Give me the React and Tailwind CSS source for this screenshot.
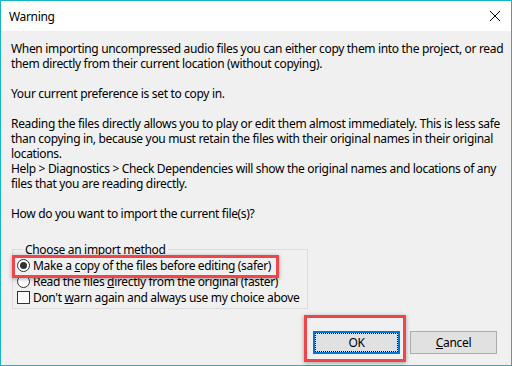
import React from 'react';

const font = { fontFamily: '"Noto Sans", "Open Sans", sans-serif' };

const Radio = ({ checked }) => (
  <span className="flex h-[13px] w-[13px] shrink-0 items-center justify-center rounded-full border border-[#333] bg-white">
    {checked && <span className="h-[7px] w-[7px] rounded-full bg-[#333]" />}
  </span>
);

const App = () => {
  const lines = [
    'When importing uncompressed audio files you can either copy them into the project, or read',
    'them directly from their current location (without copying).',
    '',
    'Your current preference is set to copy in.',
    '',
    'Reading the files directly allows you to play or edit them almost immediately. This is less safe',
    'than copying in, because you must retain the files with their original names in their original',
    'locations.',
    'Help > Diagnostics > Check Dependencies will show the original names and locations of any',
    'files that you are reading directly.',
    '',
    'How do you want to import the current file(s)?',
  ];

  return (
    <div
      className="relative flex h-[366px] w-[512px] flex-col border border-[#18b4c8] bg-[#f0f0f0] text-[12px] leading-[15px] tracking-[-0.33px] text-black"
      style={font}
    >
      {/* Title bar */}
      <div className="flex h-[30px] shrink-0 items-center justify-between bg-white pl-[8px] pr-[8px]">
        <span className="text-[12px] text-black">Warning</span>
        <svg width="12" height="12" viewBox="0 0 12 12" className="mr-[2px]">
          <path d="M1 1 L11 11 M11 1 L1 11" stroke="#000" strokeWidth="1" />
        </svg>
      </div>

      {/* Body */}
      <div className="flex flex-1 flex-col px-[10px] pt-[10px]">
        <div className="whitespace-nowrap">
          {lines.map((l, i) => (
            <div key={i} className="h-[15px]">{l}</div>
          ))}
        </div>

        <fieldset className="ml-[1px] mt-[21px] w-[296px] whitespace-nowrap border border-[#dcdcdc] pb-[3px] pl-[4px]">
          <legend className="ml-[6px] px-[2px]">Choose an import method</legend>
          <div className="flex h-[16px] items-center gap-[3px]">
            <Radio checked />
            <span>Make a <u>c</u>opy of the files before editing (safer)</span>
          </div>
          <div className="flex h-[16px] items-center gap-[3px]">
            <Radio />
            <span>Read the files <u>d</u>irectly from the original (faster)</span>
          </div>
          <div className="flex h-[16px] items-center gap-[3px]">
            <span className="h-[13px] w-[13px] shrink-0 border border-[#333] bg-white" />
            <span>Don't <u>w</u>arn again and always use my choice above</span>
          </div>
        </fieldset>

        <div className="mt-auto mb-[11px] flex justify-end gap-[10px] pr-[4px]">
          <button className="flex h-[23px] w-[87px] items-center justify-center border-2 border-[#0078d7] bg-[#e1e1e1]">
            <span className="flex h-full w-full items-center justify-center border border-dotted border-black">OK</span>
          </button>
          <button className="flex h-[23px] w-[87px] items-center justify-center border border-[#adadad] bg-[#e1e1e1]">
            <span><u>C</u>ancel</span>
          </button>
        </div>
      </div>

      {/* Annotation highlights */}
      <div className="pointer-events-none absolute left-[11px] top-[254px] h-[23px] w-[267px] border-[3px] border-[#f0464a] shadow-[0_1px_4px_rgba(0,0,0,0.35)]" />
      <div className="pointer-events-none absolute left-[303px] top-[314px] h-[47px] w-[102px] border-[3px] border-[#f0464a] shadow-[0_1px_4px_rgba(0,0,0,0.35)]" />
    </div>
  );
};

export default App;
